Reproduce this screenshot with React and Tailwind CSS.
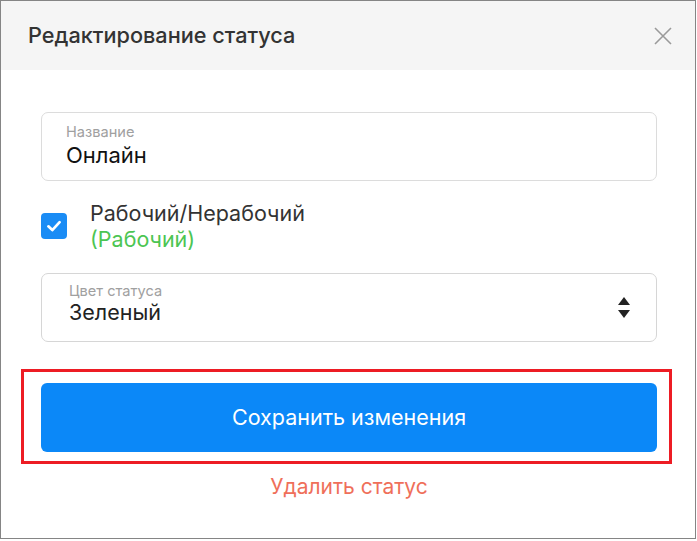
import React from "react";

export default function App() {
  return (
    <div className="w-[697px] h-[541px] bg-white" style={{ fontFamily: "Inter, 'Noto Sans', sans-serif" }}>
      <div className="w-[696px] h-[539px] border border-[#858585] flex flex-col">
        <div className="h-[69px] bg-[#f5f5f5] flex items-center justify-between pl-[27px] pr-[22px] shrink-0">
          <h1 className="text-[21.7px] font-medium text-[#333333]">Редактирование статуса</h1>
          <svg width="20" height="20" viewBox="0 0 20 20" className="mt-[1px]">
            <path d="M2 2L18 18M18 2L2 18" stroke="#9a9a9a" strokeWidth="1.6" />
          </svg>
        </div>
        <div className="pl-[40px] pr-[38px] pt-[42px] flex flex-col">
          <div className="h-[69px] border border-[#dcdcdc] rounded-[7px] pl-[24px] flex flex-col justify-center">
            <span className="text-[14.6px] leading-[17px] text-[#a0a0a0] -mt-[1px]">Название</span>
            <span className="text-[22px] leading-[28px] text-[#111]">Онлайн</span>
          </div>
          <div className="flex items-start mt-[22px] h-[60px]">
            <div className="w-[26px] h-[26px] mt-[10px] rounded-[4px] bg-[#1a8cf5] flex items-center justify-center">
              <svg width="18" height="18" viewBox="0 0 16 16">
                <path d="M3 8.3L6.5 11.6L13 4.6" fill="none" stroke="white" strokeWidth="2.4" strokeLinecap="round" strokeLinejoin="round" />
              </svg>
            </div>
            <div className="ml-[23px] flex flex-col -mt-[3px]">
              <span className="text-[21.5px] leading-[26px] text-[#333]">Рабочий/Нерабочий</span>
              <span className="text-[21.5px] leading-[26px] text-[#4cc552]">(Рабочий)</span>
            </div>
          </div>
          <div className="h-[69px] mt-[10px] border border-[#d6d6d6] rounded-[7px] pl-[27px] pr-[25px] flex items-center justify-between">
            <div className="flex flex-col -mt-[8px]">
              <span className="text-[14.6px] leading-[17px] text-[#a0a0a0]">Цвет статуса</span>
              <span className="text-[21.5px] leading-[24px] text-[#222]">Зеленый</span>
            </div>
            <svg width="14" height="24" viewBox="0 0 14 24">
              <path d="M7 1L13 9H1Z" fill="#222" />
              <path d="M1 14H13L7 22Z" fill="#222" />
            </svg>
          </div>
          <div className="relative mt-[41px]">
            <div className="absolute left-[-20px] right-[-15px] top-[-14px] bottom-[-12px] border-[3px] border-[#ed1c24]" />
            <button className="relative w-full h-[69px] rounded-[6px] bg-[#0b88f8] text-white text-[21.5px]">Сохранить изменения</button>
          </div>
          <div className="mt-[22px] text-center text-[21px] leading-[26px] text-[#ef6f5a]">Удалить статус</div>
        </div>
      </div>
    </div>
  );
}
